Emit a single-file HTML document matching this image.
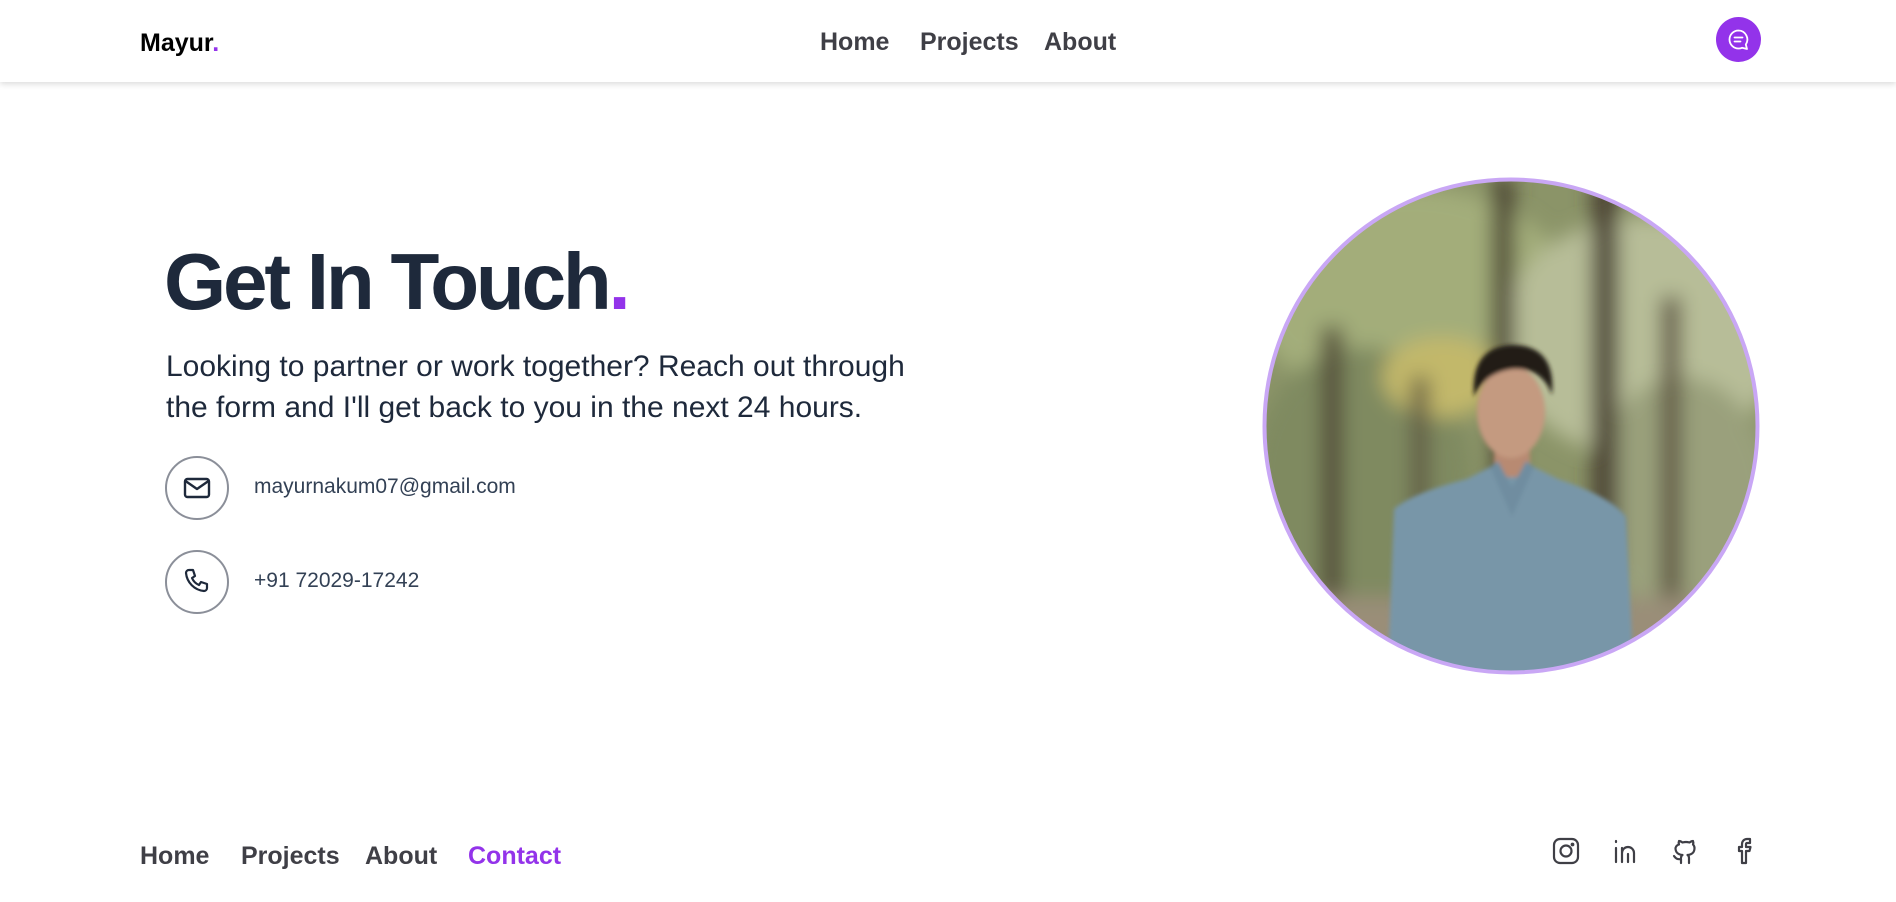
<!DOCTYPE html>
<html><head><meta charset="utf-8"><style>
*{margin:0;padding:0;box-sizing:border-box}
body{width:1896px;height:902px;background:#fff;font-family:"Liberation Sans",sans-serif;position:relative;overflow:hidden}
.nav{position:absolute;left:0;top:0;width:1896px;height:82px;background:#fff;box-shadow:0 2px 6px rgba(0,0,0,.15)}
.logo{position:absolute;left:140px;top:29px;font-size:25px;font-weight:bold;color:#000}
.p{color:#9333ea}
.links{position:absolute;top:28px;font-size:25px;font-weight:bold;color:#3f3f46}
.links span{position:absolute;white-space:nowrap}
.chat{position:absolute;left:1716px;top:17px;width:45px;height:45px;border-radius:50%;background:#9333ea}
h1{position:absolute;left:164px;top:232px;font-size:80px;letter-spacing:-3.2px;color:#1e293b;font-weight:bold;line-height:100px}
.desc{position:absolute;left:166px;top:346px;font-size:30px;line-height:41px;color:#1e293b;width:760px}
.circ{position:absolute;left:165px;width:64px;height:64px;border:2px solid #8b8f99;border-radius:50%}
.ct{position:absolute;left:254px;font-size:21px;color:#334155}
.photo{position:absolute;left:1262px;top:177px}
.fl{position:absolute;top:842px;font-size:25px;font-weight:bold;color:#3f3f46;white-space:nowrap}
.ic{position:absolute;top:836px}
</style></head><body>
<div class="nav">
<div class="logo">Mayur<span class="p">.</span></div>
<div class="links"><span style="left:820px">Home</span><span style="left:920px">Projects</span><span style="left:1044px">About</span></div>
<div class="chat"><svg width="45" height="45" viewBox="0 0 45 45"><path d="M22.5 13.5a9 9 0 1 0 0 18c1.2 0 2.4-.2 3.5-.7L31 32l-1.2-4.5a9 9 0 0 0-7.3-14z" fill="none" stroke="#fff" stroke-width="1.8" stroke-linejoin="round"/><path d="M18.5 20.5h8M18.5 24.5h6" stroke="#fff" stroke-width="1.8" stroke-linecap="round"/></svg></div>
</div>
<h1>Get In Touch<span class="p">.</span></h1>
<div class="desc">Looking to partner or work together? Reach out through the form and I'll get back to you in the next 24 hours.</div>
<div class="circ" style="top:456px"><svg width="60" height="60" viewBox="0 0 60 60"><rect x="18" y="21" width="24" height="18" rx="2.5" fill="none" stroke="#1e293b" stroke-width="2.4"/><path d="M18.5 23l11.5 8 11.5-8" fill="none" stroke="#1e293b" stroke-width="2.4" stroke-linejoin="round"/></svg></div>
<div class="ct" style="top:475px">mayurnakum07@gmail.com</div>
<div class="circ" style="top:550px"><svg width="60" height="60" viewBox="0 0 60 60"><path d="M22 18h4l2 6-3 2a13 13 0 0 0 7 7l2-3 6 2v4a3 3 0 0 1-3 3 20 20 0 0 1-18-18 3 3 0 0 1 3-3z" fill="none" stroke="#1e293b" stroke-width="2.2" stroke-linejoin="round"/></svg></div>
<div class="ct" style="top:569px">+91 72029-17242</div>
<div class="photo"><svg width="500" height="500" viewBox="0 0 500 500">
<defs><clipPath id="c"><circle cx="249" cy="249" r="246"/></clipPath><filter id="b"><feGaussianBlur stdDeviation="10"/></filter><filter id="b2"><feGaussianBlur stdDeviation="2"/></filter></defs>
<g clip-path="url(#c)">
<rect width="500" height="500" fill="#8b9468"/>
<g filter="url(#b)">
<ellipse cx="150" cy="120" rx="160" ry="110" fill="#a3ad7a"/>
<ellipse cx="380" cy="160" rx="140" ry="120" fill="#b7bd98"/>
<ellipse cx="100" cy="300" rx="110" ry="130" fill="#7f8a60"/>
<ellipse cx="420" cy="320" rx="90" ry="120" fill="#9aa07c"/>
<ellipse cx="180" cy="200" rx="60" ry="40" fill="#c2b86a"/>
<rect x="230" y="0" width="22" height="340" fill="#4c4432"/>
<rect x="330" y="0" width="26" height="400" fill="#4a3f30"/>
<rect x="60" y="150" width="20" height="320" fill="#4f4634"/>
<rect x="400" y="120" width="18" height="330" fill="#564a38"/>
<rect x="150" y="200" width="16" height="280" fill="#5c5340"/>
<rect x="0" y="420" width="500" height="80" fill="#9a8e78"/>
</g>
<g filter="url(#b2)" transform="translate(0,40)">
<path d="M124 500 L132 292 Q150 276 205 262 L228 250 L272 250 L296 262 Q350 280 364 300 L374 500Z" fill="#7896a8"/>
<rect x="232" y="200" width="36" height="60" fill="#b88a72"/>
<ellipse cx="249" cy="195" rx="34" ry="46" fill="#c49a80"/>
<path d="M212 180 Q208 130 250 128 Q294 128 290 178 Q280 150 250 152 Q222 156 212 180Z" fill="#231a18"/>
<path d="M228 250 L250 300 L272 250 L264 244 L250 270 L236 244Z" fill="#6f8da0"/>
</g>
</g>
<circle cx="249" cy="249" r="246.5" fill="none" stroke="#c9a7f5" stroke-width="4"/>
</svg></div>
<div class="fl" style="left:140px">Home</div>
<div class="fl" style="left:241px">Projects</div>
<div class="fl" style="left:365px">About</div>
<div class="fl" style="left:468px;color:#9333ea">Contact</div>
<div class="ic" style="left:1551px"><svg width="30" height="30" viewBox="0 0 30 30" fill="none" stroke="#3f3f46" stroke-width="2.2"><rect x="3" y="3" width="24" height="24" rx="6"/><circle cx="15" cy="15" r="5.5"/><circle cx="21.5" cy="8.5" r=".8" fill="#3f3f46"/></svg></div>
<div class="ic" style="left:1611px"><svg width="30" height="30" viewBox="0 0 30 30" fill="none" stroke="#3f3f46" stroke-width="2.2" stroke-linecap="round"><path d="M5 12v14M5 5v1M11 26V12M11 17a6 6 0 0 1 12 0v9M17 26v-8"/></svg></div>
<div class="ic" style="left:1670px"><svg width="30" height="30" viewBox="0 0 30 30" fill="none" stroke="#3f3f46" stroke-width="2.2" stroke-linejoin="round" stroke-linecap="round"><path d="M11 27v-4c-5 1-6-2-7-3M19 27v-5c0-1.5-.5-2.5-1.5-3 4-.5 7-2 7-7a5 5 0 0 0-1.5-3.5 4.5 4.5 0 0 0 0-3.5s-1.5 0-3.5 1.5a12 12 0 0 0-7 0C10.5 5 9 5 9 5a4.5 4.5 0 0 0 0 3.5A5 5 0 0 0 5.5 12c0 5 3 6.5 7 7-1 .5-1.5 1.5-1.5 3"/></svg></div>
<div class="ic" style="left:1731px"><svg width="30" height="30" viewBox="0 0 30 30" fill="none" stroke="#3f3f46" stroke-width="2.2" stroke-linejoin="round"><path d="M19 3h-3a5 5 0 0 0-5 5v3H8v4h3v12h4V15h3.5l1-4H15V8a1 1 0 0 1 1-1h3z"/></svg></div>
</body></html>
